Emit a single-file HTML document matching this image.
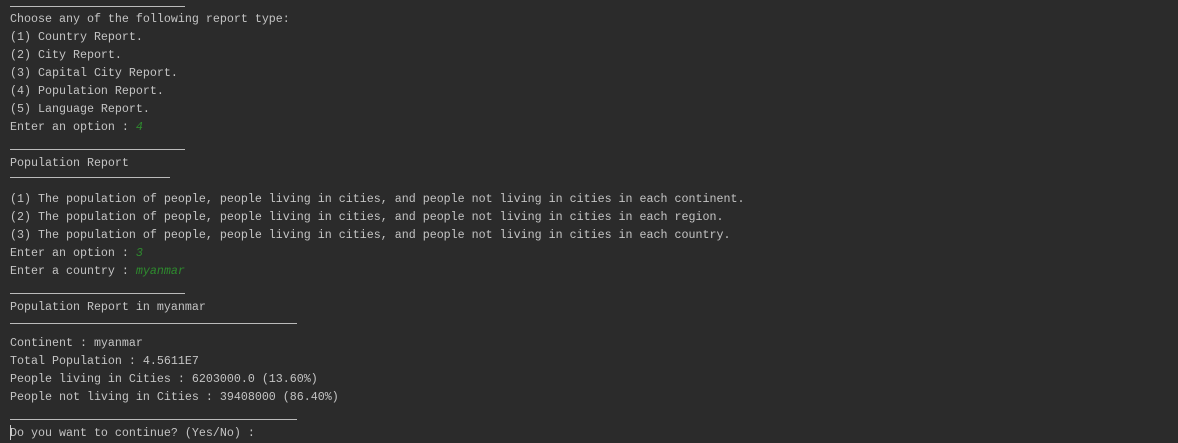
<!DOCTYPE html>
<html><head><style>
html,body{margin:0;padding:0;background:#2b2b2b;width:1178px;height:443px;overflow:hidden}
#t{position:absolute;left:10px;top:-8px;font:11.67px/18px "Liberation Mono",monospace;color:#c4c4c4;white-space:pre}
.g{color:#2e8b2e;font-style:italic}
.l{position:absolute;left:10px;height:1px;background:#bbbbbb}
.c{position:absolute;left:10px;top:425px;width:1px;height:15px;background:#cccccc}
</style></head><body>
<div id="t">&nbsp;
Choose any of the following report type:
(1) Country Report.
(2) City Report.
(3) Capital City Report.
(4) Population Report.
(5) Language Report.
Enter an option : <span class="g">4</span>
&nbsp;
Population Report
&nbsp;
(1) The population of people, people living in cities, and people not living in cities in each continent.
(2) The population of people, people living in cities, and people not living in cities in each region.
(3) The population of people, people living in cities, and people not living in cities in each country.
Enter an option : <span class="g">3</span>
Enter a country : <span class="g">myanmar</span>
&nbsp;
Population Report in myanmar
&nbsp;
Continent : myanmar
Total Population : 4.5611E7
People living in Cities : 6203000.0 (13.60%)
People not living in Cities : 39408000 (86.40%)
&nbsp;
Do you want to continue? (Yes/No) : </div>
<div class="l" style="top:6px;width:175px"></div>
<div class="l" style="top:149px;width:175px"></div>
<div class="l" style="top:177px;width:160px"></div>
<div class="l" style="top:293px;width:175px"></div>
<div class="l" style="top:323px;width:287px"></div>
<div class="l" style="top:419px;width:287px"></div>
<div class="c"></div>
</body></html>
